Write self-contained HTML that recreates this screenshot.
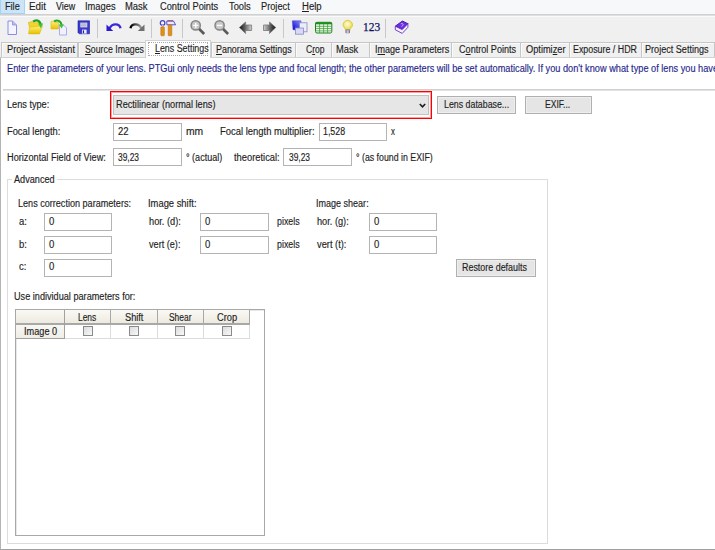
<!DOCTYPE html>
<html><head><meta charset="utf-8">
<style>
html,body{margin:0;padding:0;}
body{width:715px;height:550px;position:relative;overflow:hidden;background:#fff;font-family:"Liberation Sans",sans-serif;font-size:9px;color:#1e1e1e;}
.a{position:absolute;}
.t{position:absolute;white-space:nowrap;line-height:10px;font-size:10px;transform:scaleX(.95);transform-origin:0 0;-webkit-text-stroke:0.15px currentColor;}
#menubar{left:0;top:0;width:715px;height:14px;background:#f7f8f9;}
#mline{left:0;top:14px;width:715px;height:2px;background:linear-gradient(#d0d0d0 50%,#e0e0e0 50%);}
#mline2{left:0;top:16px;width:715px;height:1px;background:#fafafa;}
#toolbar{left:0;top:17px;width:715px;height:40px;background:#f0f0f0;}
.sep{position:absolute;top:19px;width:1px;height:19px;background:#c8c8c8;}
.tab{position:absolute;top:42px;height:16px;background:#f0f0f0;border:1px solid #c6c6c6;box-sizing:border-box;box-shadow:inset 1px 1px 0 #fafafa;}
.tab.act{top:40px;height:18px;background:#fff;border-color:#d9d9d9;}
.inp{position:absolute;height:18px;box-sizing:border-box;border:1px solid #b4b4b4;background:#fff;}
.cb{position:absolute;top:326px;width:10px;height:10px;box-sizing:border-box;border:1px solid #8a8a8a;background:linear-gradient(135deg,#dcdcdc,#f8f8f8);}
.btn{position:absolute;height:18px;box-sizing:border-box;border:1px solid #b0b0b0;background:#e5e5e5;box-shadow:inset 0 0 0 1px #eeeeee;}
</style></head>
<body>
<div class="a" id="menubar"></div>
<div class="a" style="left:0;top:0;width:25px;height:14px;background:#cce4f7;box-sizing:border-box;border:1px solid #a8d2f3;border-top:none"></div>
<div class="a" id="mline"></div>
<div class="a" id="mline2"></div>
<div class="a" id="toolbar"></div>

<!-- menu text -->

<!-- toolbar separators -->
<div class="sep" style="left:97px"></div>
<div class="sep" style="left:151px"></div>
<div class="sep" style="left:182px"></div>
<div class="sep" style="left:283px"></div>
<div class="sep" style="left:385px"></div>


<!-- toolbar icons -->
<svg class="a" style="left:0;top:16px" width="420" height="24" viewBox="0 16 420 24">
 <defs>
  <linearGradient id="gfold" x1="0" y1="0" x2="0" y2="1"><stop offset="0" stop-color="#fff27a"/><stop offset="1" stop-color="#e8c000"/></linearGradient>
  <linearGradient id="garr" x1="0" y1="0" x2="1" y2="0"><stop offset="0" stop-color="#000"/><stop offset="1" stop-color="#a0a0a0"/></linearGradient>
  <linearGradient id="garrL" x1="0" y1="0" x2="1" y2="0"><stop offset="0" stop-color="#101010"/><stop offset=".45" stop-color="#606060"/><stop offset="1" stop-color="#d0d0d0"/></linearGradient>
  <linearGradient id="garrR" x1="1" y1="0" x2="0" y2="0"><stop offset="0" stop-color="#101010"/><stop offset=".45" stop-color="#606060"/><stop offset="1" stop-color="#d0d0d0"/></linearGradient>
  <linearGradient id="garr2" x1="1" y1="0" x2="0" y2="0"><stop offset="0" stop-color="#000"/><stop offset="1" stop-color="#a0a0a0"/></linearGradient>
  <linearGradient id="gblue" x1="0" y1="1" x2="1" y2="0"><stop offset="0" stop-color="#0000d8"/><stop offset="1" stop-color="#9090ff"/></linearGradient>
  <radialGradient id="gbulb" cx="0.45" cy="0.4" r="0.6"><stop offset="0" stop-color="#fffce0"/><stop offset="1" stop-color="#e8d850"/></radialGradient>
 </defs>
 <!-- new -->
 <path d="M8 21 H12.5 L16.5 25 V34.5 H8 Z" fill="#f4f4ff" stroke="#8c8ce6" stroke-width="1"/>
 <path d="M12.5 21 V25 H16.5" fill="#b8b8f0" stroke="#8c8ce6" stroke-width="0.8"/>
 <!-- open -->
 <path d="M28.3 22.6 L32.5 21.3 L34 22.8 L39.5 22.6 L40.5 27 L30 29 Z" fill="#f2d430" stroke="#d4b000" stroke-width="0.5"/>
 <path d="M29.5 27.2 L42.6 25.8 L39.5 33.9 L28.6 33.9 Z" fill="url(#gfold)" stroke="#d8b400" stroke-width="0.5"/>
 <path d="M33.2 21.6 C35.5 19.6 39.5 19.8 40.6 24.2" fill="none" stroke="#1e9e1e" stroke-width="2.3"/>
 <path d="M38 23.6 L43.2 23.4 L40.8 28.2 Z" fill="#40c040"/>
 <!-- open add -->
 <path d="M51 21.5 L54 21 L55 22.5 L58.5 22.5 V29 H51 Z" fill="url(#gfold)" stroke="#d8b000" stroke-width="0.5"/>
 <path d="M59.5 25 H63.5 L66.5 28 V35 H59.5 Z" fill="#f0f0ff" stroke="#9a9ae8" stroke-width="0.8"/>
 <path d="M54 21.5 C57 19.5 61 20.5 61.5 25" fill="none" stroke="#22a822" stroke-width="2"/>
 <path d="M59 24.5 L64 24.5 L61.5 28.5 Z" fill="#40c040"/>
 <!-- save -->
 <path d="M78 20.8 H89.5 V33.8 H79.2 L78 32.6 Z" fill="#3a3acc" stroke="#2020a0" stroke-width="0.6"/>
 <rect x="80.3" y="22.6" width="7" height="4.8" fill="#d8d8e8"/>
 <path d="M81.2 24 H86.4 M81.2 25.8 H86.4" stroke="#8888a0" stroke-width="0.6"/>
 <rect x="82" y="29.6" width="4.6" height="4" fill="#f0f0f8"/>
 <rect x="82.8" y="30.3" width="1.3" height="3" fill="#2a2aa0"/>
 <!-- undo -->
 <path d="M120.5 28.2 C119.5 23.2 112 23 109.5 28.5" fill="none" stroke="#3a2ad8" stroke-width="2.4"/>
 <path d="M106.5 24.5 V31 H113.2 Z" fill="#2a1ad0"/>
 <!-- redo -->
 <path d="M130.5 28.2 C131.5 23.2 139 23 141.5 28.5" fill="none" stroke="url(#garr)" stroke-width="2.4"/>
 <path d="M144.5 24.5 V31 H137.8 Z" fill="#707070"/>
 <!-- tools -->
 <circle cx="162.6" cy="22.9" r="2.3" fill="#f4f4ff" stroke="#4444c8" stroke-width="1.2"/>
 <rect x="161.8" y="24.8" width="1.6" height="2.2" fill="#c0c0f0"/>
 <rect x="160.8" y="26.8" width="3.6" height="9" rx="0.8" fill="#e0901a" stroke="#b86a00" stroke-width="0.5"/>
 <path d="M166.8 21 H173.5 L175.6 24.8 H166.8 Z" fill="#e8e8ff" stroke="#4a44c0" stroke-width="0.9"/>
 <path d="M167.5 20.8 H173" stroke="#a03040" stroke-width="0.8"/>
 <rect x="168.2" y="24.8" width="3.6" height="11" rx="0.8" fill="#e0901a" stroke="#b86a00" stroke-width="0.5"/>
 <!-- zoom in -->
 <circle cx="195.7" cy="25.4" r="4.6" fill="#c8c8c8" stroke="#858585" stroke-width="1.5"/>
 <path d="M195.7 22.8 V28 M193.1 25.4 H198.3" stroke="#fafafa" stroke-width="1.4"/>
 <path d="M199.2 29 L204.2 34" stroke="#5a5a5a" stroke-width="2.6"/>
 <!-- zoom out -->
 <circle cx="219.6" cy="25.4" r="4.6" fill="#c8c8c8" stroke="#858585" stroke-width="1.5"/>
 <path d="M217 25.4 H222.2" stroke="#fafafa" stroke-width="1.4"/>
 <path d="M223.1 29 L228.1 34" stroke="#5a5a5a" stroke-width="2.6"/>
 <!-- back -->
 <path d="M239.3 27.5 L245.6 22 V25 H251.6 V30.5 H245.6 V33.5 Z" fill="url(#garrL)" stroke="#787878" stroke-width="0.8"/>
 <!-- forward -->
 <path d="M275.8 27.5 L269.5 22 V25 H263.5 V30.5 H269.5 V33.5 Z" fill="url(#garrR)" stroke="#787878" stroke-width="0.8"/>
 <!-- squares -->
 <path d="M292.3 20.8 H301 V29.8 H293 Z" fill="url(#gblue)" stroke="#4040c0" stroke-width="0.5"/>
 <rect x="299.5" y="22.8" width="7.5" height="9" fill="#ececff" stroke="#8a8ab8" stroke-width="0.8"/>
 <rect x="295.5" y="28" width="8" height="6.2" fill="#d8d8f8" stroke="#8a8ab8" stroke-width="0.8"/>
 <!-- table -->
 <rect x="315.5" y="22.3" width="16.3" height="10.7" rx="1.5" fill="#eefaea" stroke="#1a801a" stroke-width="1"/>
 <rect x="315.5" y="22.3" width="16.3" height="2" fill="#1a901a"/>
 <path d="M316 26.3 H331.5 M316 28.6 H331.5 M316 30.9 H331.5 M319.6 24 V33 M323.6 24 V33 M327.6 24 V33" stroke="#3a9a3a" stroke-width="0.75"/>
 <!-- bulb -->
 <path d="M345.4 29.6 C345 27.6 343.1 26.6 343.1 24.9 A4.7 4.5 0 0 1 352.5 24.9 C352.5 26.6 350.6 27.6 350.2 29.6 Z" fill="url(#gbulb)" stroke="#dcc820" stroke-width="0.9"/>
 <rect x="345.4" y="29.6" width="4.6" height="3.6" rx="0.8" fill="#7a7a98"/>
 <rect x="346.6" y="30.2" width="2.2" height="2.8" fill="#c8c0e8"/>
 
 <!-- book -->
 <path d="M395.3 26.2 L402.4 21 L407.9 23.7 L402.2 29.6 Z" fill="#7030e0" stroke="#3a10b0" stroke-width="0.9"/>
 <path d="M395.3 26.2 V29.8 L402.2 33.4 L407.9 27.3 V23.7 L402.2 29.6 Z" fill="#f4f0ff" stroke="#5020c0" stroke-width="0.8"/>
 <path d="M400.8 23.8 Q402.6 23 403.2 24.2 Q403.4 25.3 401.8 26 V26.6" fill="none" stroke="#c8b0ff" stroke-width="0.9"/>
</svg>

<!-- tabs -->
<div class="tab" style="left:1px;width:77px"></div>
<div class="tab" style="left:78px;width:68px"></div>
<div class="tab" style="left:211px;width:85px"></div>
<div class="tab" style="left:295px;width:37px"></div>
<div class="tab" style="left:331px;width:39px"></div>
<div class="tab" style="left:369px;width:83px"></div>
<div class="tab" style="left:451px;width:70px"></div>
<div class="tab" style="left:520px;width:50px"></div>
<div class="tab" style="left:569px;width:73px"></div>
<div class="tab" style="left:641px;width:74px"></div>
<!-- content -->
<div class="a" style="left:0;top:57px;width:715px;height:493px;background:#fff;border-top:1px solid #d2d2d2;border-left:1px solid #b4b4b4;border-bottom:1px solid #a0a0a0;box-sizing:border-box"></div>
<div class="a" style="left:145px;top:40px;width:66px;height:18px;background:#fff;border:1px solid #d2d2d2;border-bottom:none;box-sizing:border-box"></div>
<div class="a" style="left:148px;top:42px;width:60px;height:14px;border:1px dotted #a8a8a8;box-sizing:border-box"></div>

<div class="a" style="left:3px;top:89px;width:712px;height:1px;background:#d0d0d0"></div>
<div class="a" style="left:3px;top:90px;width:712px;height:1px;background:#e4e4e4"></div>

<div class="a" style="left:110px;top:91px;width:322px;height:28px;box-sizing:border-box;border:1px solid #ff0000;box-shadow:inset 0 0 0 1px rgba(255,40,40,.45)"></div>
<div class="a" style="left:113px;top:95px;width:316px;height:20px;box-sizing:border-box;border:1px solid #c2c2c2;background:#e6e6e6"></div>
<svg class="a" style="left:419px;top:103px" width="7" height="6"><path d="M0.8 1 L3.5 3.8 L6.2 1" fill="none" stroke="#1e1e1e" stroke-width="1.6"/></svg>
<div class="btn" style="left:437px;top:96px;width:79px"></div>
<div class="btn" style="left:525px;top:96px;width:67px"></div>

<div class="inp" style="left:113px;top:123px;width:69px"></div>
<div class="inp" style="left:319px;top:123px;width:68px"></div>

<div class="inp" style="left:113px;top:148px;width:69px"></div>
<div class="inp" style="left:283px;top:148px;width:69px"></div>

<!-- Advanced group -->
<div class="a" style="left:7px;top:179px;width:541px;height:365px;box-sizing:border-box;border:1px solid #dcdcdc"></div>
<div class="a" style="left:12px;top:174px;width:45px;height:10px;background:#fff"></div>


<div class="inp" style="left:44px;top:213px;width:68px"></div>
<div class="inp" style="left:200px;top:213px;width:69px"></div>
<div class="inp" style="left:369px;top:213px;width:68px"></div>

<div class="inp" style="left:44px;top:236px;width:68px"></div>
<div class="inp" style="left:200px;top:236px;width:69px"></div>
<div class="inp" style="left:369px;top:236px;width:68px"></div>

<div class="inp" style="left:44px;top:259px;width:68px"></div>

<div class="btn" style="left:456px;top:259px;width:80px"></div>


<!-- table -->
<div class="a" style="left:15px;top:309px;width:250px;height:227px;box-sizing:border-box;border:1px solid #a8a8a8;background:#fff"></div>
<div class="a" style="left:16px;top:310px;width:248px;height:225px;box-sizing:border-box;border:1px solid #e8e8e8;border-right:none;border-bottom:none"></div>
<!-- header row -->
<div class="a" style="left:16px;top:310px;width:234px;height:14px;background:linear-gradient(#faf9f5,#ece9de);"></div>
<div class="a" style="left:16px;top:323px;width:234px;height:2px;background:#a8a8a8"></div>
<div class="a" style="left:16px;top:325px;width:48px;height:13px;background:linear-gradient(#f8f7f2,#efede4)"></div>
<div class="a" style="left:64px;top:310px;width:1px;height:29px;background:#a0a0a0"></div>
<div class="a" style="left:110px;top:310px;width:1px;height:14px;background:#a8a8a8"></div>
<div class="a" style="left:157px;top:310px;width:1px;height:14px;background:#a8a8a8"></div>
<div class="a" style="left:203px;top:310px;width:1px;height:14px;background:#a8a8a8"></div>
<div class="a" style="left:249px;top:310px;width:1px;height:14px;background:#a8a8a8"></div>
<div class="a" style="left:110px;top:325px;width:1px;height:14px;background:#dcdcdc"></div>
<div class="a" style="left:157px;top:325px;width:1px;height:14px;background:#dcdcdc"></div>
<div class="a" style="left:203px;top:325px;width:1px;height:14px;background:#dcdcdc"></div>
<div class="a" style="left:249px;top:325px;width:1px;height:14px;background:#dcdcdc"></div>
<div class="a" style="left:16px;top:338px;width:48px;height:1px;background:#a0a0a0"></div>
<div class="a" style="left:65px;top:338px;width:185px;height:1px;background:#dcdcdc"></div>
<div class="cb" style="left:83px"></div>
<div class="cb" style="left:129px"></div>
<div class="cb" style="left:175px"></div>
<div class="cb" style="left:222px"></div>
<div class="t" style="left:4.69px;top:2px;transform:scaleX(0.9133);">File</div>
<div class="t" style="left:29.22px;top:2px;transform:scaleX(0.9812);">Edit</div>
<div class="t" style="left:55.90px;top:2px;transform:scaleX(0.8955);">View</div>
<div class="t" style="left:85.17px;top:2px;transform:scaleX(0.9313);">Images</div>
<div class="t" style="left:125.46px;top:2px;transform:scaleX(0.9435);">Mask</div>
<div class="t" style="left:159.60px;top:2px;transform:scaleX(0.9270);">Control Points</div>
<div class="t" style="left:229.30px;top:2px;transform:scaleX(0.9304);">Tools</div>
<div class="t" style="left:261.08px;top:2px;transform:scaleX(0.9233);">Project</div>
<div class="t" style="left:301.60px;top:2px;transform:scaleX(0.9550);"><u>H</u>elp</div>
<div class="t" style="left:6.78px;top:45px;transform:scaleX(0.9192);">Project Assistant</div>
<div class="t" style="left:84.50px;top:45px;transform:scaleX(0.8761);"><u>S</u>ource Images</div>
<div class="t" style="left:154.50px;top:44px;transform:scaleX(0.8850);"><u>L</u>ens Settings</div>
<div class="t" style="left:215.60px;top:45px;transform:scaleX(0.8894);"><u>P</u>anorama Settings</div>
<div class="t" style="left:305.70px;top:45px;transform:scaleX(0.8591);">C<u>r</u>op</div>
<div class="t" style="left:335.67px;top:45px;transform:scaleX(0.9304);">Mask</div>
<div class="t" style="left:374.80px;top:45px;transform:scaleX(0.9025);">I<u>m</u>age Parameters</div>
<div class="t" style="left:458.90px;top:45px;transform:scaleX(0.9095);">C<u>o</u>ntrol Points</div>
<div class="t" style="left:526.30px;top:45px;transform:scaleX(0.9233);">Optimi<u>z</u>er</div>
<div class="t" style="left:573.32px;top:45px;transform:scaleX(0.8845);">Exposure / HDR</div>
<div class="t" style="left:645.49px;top:45px;transform:scaleX(0.9087);">Project Settings</div>
<div class="t" style="left:6.58px;top:100px;transform:scaleX(0.9159);">Lens type:</div>
<div class="t" style="left:115.88px;top:100px;transform:scaleX(0.9178);">Rectilinear (normal lens)</div>
<div class="t" style="left:443.62px;top:100px;transform:scaleX(0.8819);">Lens database...</div>
<div class="t" style="left:545.14px;top:100px;transform:scaleX(0.8571);">EXIF...</div>
<div class="t" style="left:6.57px;top:127px;transform:scaleX(0.9304);">Focal length:</div>
<div class="t" style="left:118.40px;top:127px;transform:scaleX(0.9500);">22</div>
<div class="t" style="left:185.50px;top:127px;transform:scaleX(1.0312);">mm</div>
<div class="t" style="left:220.46px;top:127px;transform:scaleX(0.9449);">Focal length multiplier:</div>
<div class="t" style="left:322.82px;top:127px;transform:scaleX(0.8833);">1,528</div>
<div class="t" style="left:390.70px;top:127px;transform:scaleX(0.7800);">x</div>
<div class="t" style="left:6.58px;top:153px;transform:scaleX(0.9189);">Horizontal Field of View:</div>
<div class="t" style="left:118.40px;top:153px;transform:scaleX(0.8400);">39,23</div>
<div class="t" style="left:185.50px;top:153px;transform:scaleX(0.9025);">° (actual)</div>
<div class="t" style="left:234.30px;top:153px;transform:scaleX(0.9333);">theoretical:</div>
<div class="t" style="left:288.50px;top:153px;transform:scaleX(0.8400);">39,23</div>
<div class="t" style="left:356.00px;top:153px;transform:scaleX(0.8782);">° (as found in EXIF)</div>
<div class="t" style="left:14.30px;top:175px;transform:scaleX(0.9136);">Advanced</div>
<div class="t" style="left:17.69px;top:199px;transform:scaleX(0.9073);">Lens correction parameters:</div>
<div class="t" style="left:148.06px;top:199px;transform:scaleX(0.9380);">Image shift:</div>
<div class="t" style="left:315.80px;top:199px;transform:scaleX(0.9018);">Image shear:</div>
<div class="t" style="left:18.50px;top:217px;transform:scaleX(0.9500);">a:</div>
<div class="t" style="left:48.70px;top:217px;transform:scaleX(0.9500);">0</div>
<div class="t" style="left:149.00px;top:217px;transform:scaleX(0.9235);">hor. (d):</div>
<div class="t" style="left:204.70px;top:217px;transform:scaleX(0.9500);">0</div>
<div class="t" style="left:276.70px;top:217px;transform:scaleX(0.8840);">pixels</div>
<div class="t" style="left:316.70px;top:217px;transform:scaleX(0.9206);">hor. (g):</div>
<div class="t" style="left:373.50px;top:217px;transform:scaleX(0.9500);">0</div>
<div class="t" style="left:18.50px;top:240px;transform:scaleX(0.9500);">b:</div>
<div class="t" style="left:48.70px;top:240px;transform:scaleX(0.9500);">0</div>
<div class="t" style="left:149.00px;top:240px;transform:scaleX(0.9118);">vert (e):</div>
<div class="t" style="left:204.70px;top:240px;transform:scaleX(0.9500);">0</div>
<div class="t" style="left:276.70px;top:240px;transform:scaleX(0.8840);">pixels</div>
<div class="t" style="left:316.70px;top:240px;transform:scaleX(0.9290);">vert (t):</div>
<div class="t" style="left:373.50px;top:240px;transform:scaleX(0.9500);">0</div>
<div class="t" style="left:18.50px;top:262px;transform:scaleX(0.9500);">c:</div>
<div class="t" style="left:48.70px;top:262px;transform:scaleX(0.9500);">0</div>
<div class="t" style="left:461.91px;top:263px;transform:scaleX(0.8917);">Restore defaults</div>
<div class="t" style="left:14.39px;top:292px;transform:scaleX(0.9137);">Use individual parameters for:</div>
<div class="t" style="left:78.46px;top:313px;transform:scaleX(0.8381);">Lens</div>
<div class="t" style="left:125.30px;top:313px;transform:scaleX(0.9200);">Shift</div>
<div class="t" style="left:169.10px;top:313px;transform:scaleX(0.8407);">Shear</div>
<div class="t" style="left:217.30px;top:313px;transform:scaleX(0.9333);">Crop</div>
<div class="t" style="left:23.68px;top:327px;transform:scaleX(0.9171);">Image 0</div>
<div class="t" style="left:7.26px;top:64px;transform:scaleX(0.9195);color:#28288a">Enter the parameters of your lens. PTGui only needs the lens type and focal length; the other parameters will be set automatically. If you don't know what type of lens you have</div>
<div class="a" style="left:362.6px;top:21px;font-family:'Liberation Serif',serif;font-size:13px;line-height:12px;color:#121262;white-space:nowrap;transform:scaleX(.88);transform-origin:0 0;-webkit-text-stroke:0.25px #121262">123</div>
</body></html>
